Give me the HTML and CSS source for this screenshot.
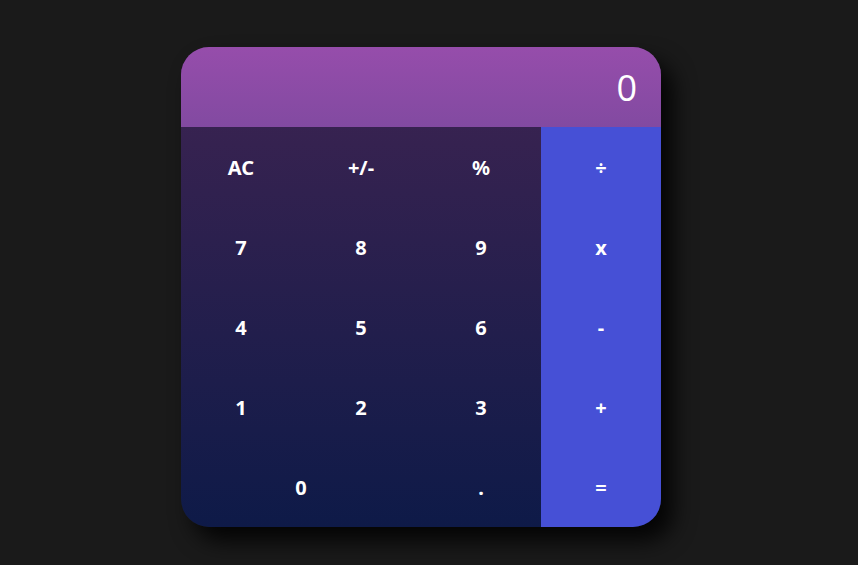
FILE: index.html
```html
<!DOCTYPE html>
<html>
<head>
<meta charset="utf-8">
<link rel="stylesheet" href="styles.css">
</head>
<body>
<div class="calc">
  <div class="display">0</div>
  <div class="keys">
    <div class="key">AC</div>
    <div class="key">+/-</div>
    <div class="key">%</div>
    <div class="key op">÷</div>
    <div class="key">7</div>
    <div class="key">8</div>
    <div class="key">9</div>
    <div class="key op">x</div>
    <div class="key">4</div>
    <div class="key">5</div>
    <div class="key">6</div>
    <div class="key op">-</div>
    <div class="key">1</div>
    <div class="key">2</div>
    <div class="key">3</div>
    <div class="key op">+</div>
    <div class="key wide">0</div>
    <div class="key">.</div>
    <div class="key op">=</div>
  </div>
</div>
</body>
</html>
```
FILE: styles.css
```css
html, body {
  margin: 0;
  padding: 0;
  background: #1a1a1a;
  height: 100%;
}
body {
  display: flex;
  justify-content: center;
  padding: 47px 16px 0 0;
  box-sizing: border-box;
}
.calc {
  width: 480px;
  height: 480px;
  border-radius: 28px;
  overflow: hidden;
  box-shadow: 12px 14px 22px rgba(0, 0, 0, 0.85);
  display: flex;
  flex-direction: column;
  background: linear-gradient(180deg, #3f2452 0%, #0e1a48 100%);
}
.display {
  height: 80px;
  flex: none;
  background: linear-gradient(180deg, #964dab 0%, #824aa1 100%);
  color: #fff;
  font-family: "Open Sans", sans-serif;
  font-weight: 400;
  font-size: 36px;
  display: flex;
  align-items: center;
  justify-content: flex-end;
  padding-right: 24px;
  box-sizing: border-box;
}
.keys {
  flex: 1;
  display: grid;
  grid-template-columns: repeat(4, 120px);
  grid-template-rows: repeat(5, 80px);
}
.key {
  display: flex;
  align-items: center;
  justify-content: center;
  color: #fff;
  font-family: "Noto Sans", sans-serif;
  font-weight: 700;
  font-size: 20px;
}
.wide {
  grid-column: span 2;
}
.op {
  background: #4650d6;
}
```
